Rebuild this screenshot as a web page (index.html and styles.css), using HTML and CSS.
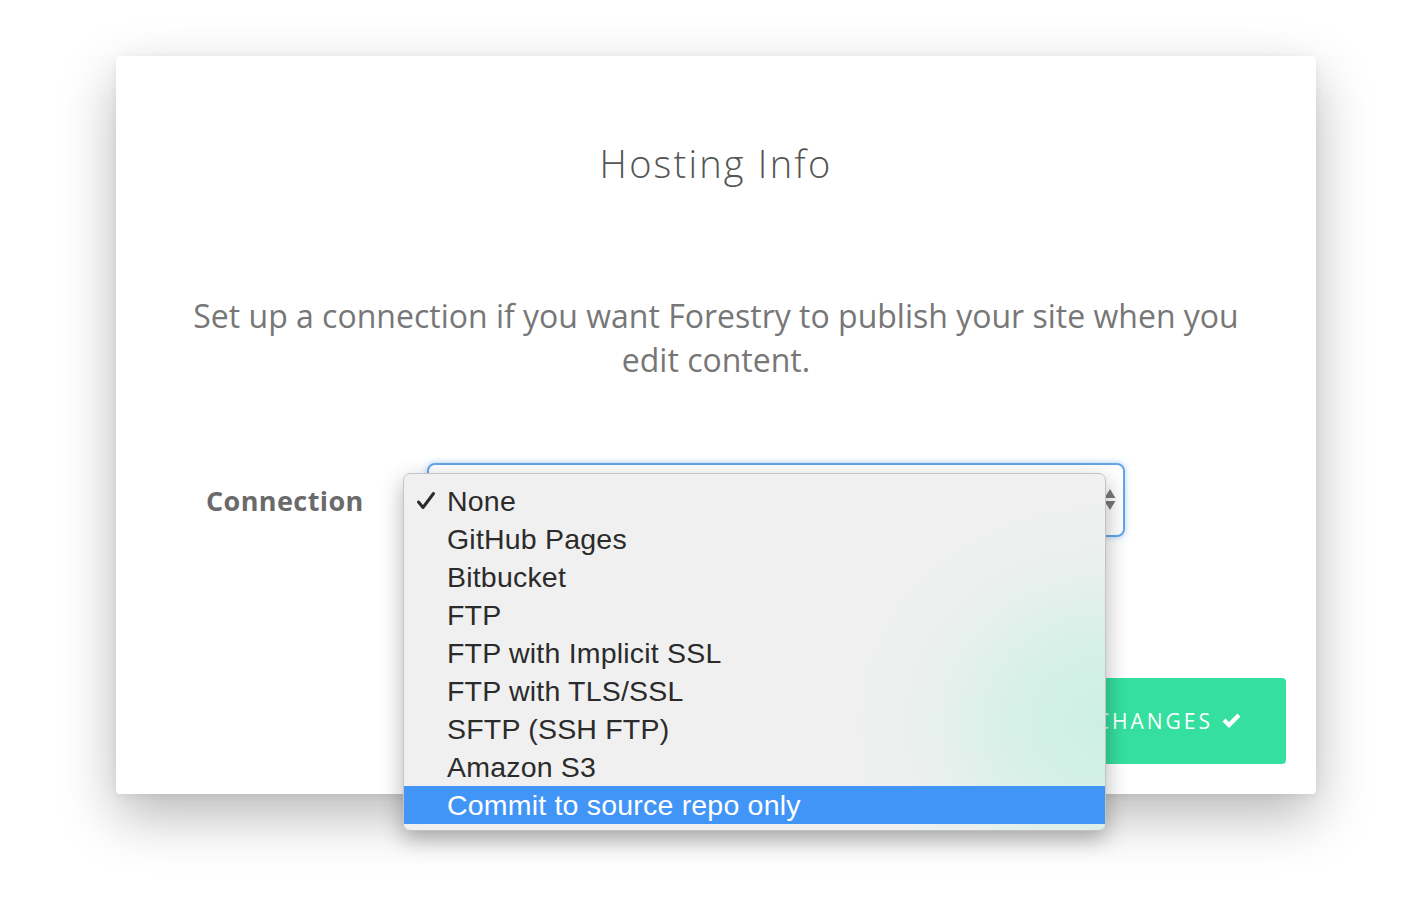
FILE: index.html
```html
<!DOCTYPE html>
<html>
<head>
<meta charset="utf-8">
<link rel="stylesheet" href="styles.css">
</head>
<body>
<div class="stage">
  <div class="card">
    <h1 class="title">Hosting Info</h1>
    <p class="lead">Set up a connection if you want Forestry to publish your site when you edit content.</p>
    <div class="form-row">
      <label class="label">Connection</label>
      <div class="select-wrap">
        <div class="select">
          <svg class="arrows" width="12" height="24" viewBox="0 0 12 24"><path d="M6 1 L11.5 10 L0.5 10 Z" fill="#7a7a7a"/><path d="M0.5 13 L11.5 13 L6 22 Z" fill="#7a7a7a"/></svg>
        </div>
        <ul class="menu">
          <li class="item"><svg class="check" width="20" height="20" viewBox="0 0 20 20"><path d="M2.5 11 L7 16.5 L17.5 2.5" fill="none" stroke="#2b2b2b" stroke-width="3" stroke-linecap="round" stroke-linejoin="round"/></svg>None</li>
          <li class="item">GitHub Pages</li>
          <li class="item">Bitbucket</li>
          <li class="item">FTP</li>
          <li class="item">FTP with Implicit SSL</li>
          <li class="item">FTP with TLS/SSL</li>
          <li class="item">SFTP (SSH FTP)</li>
          <li class="item">Amazon S3</li>
          <li class="item active">Commit to source repo only</li>
        </ul>
      </div>
    </div>
    <div class="actions">
      <button class="save">SAVE CHANGES <svg class="btn-check" width="21" height="17" viewBox="0 0 21 17"><path d="M1.5 8.5 L4.5 5.5 L8 9 L16.5 0.5 L19.5 3.5 L8 15 Z" fill="#ffffff"/></svg></button>
    </div>
  </div>
</div>
</body>
</html>
```

FILE: styles.css
```css
* { box-sizing: border-box; }
html, body { margin: 0; padding: 0; background: #ffffff; }
body { width: 1426px; height: 908px; overflow: hidden; font-family: "Open Sans", "Liberation Sans", sans-serif; }
.stage { padding: 56px 110px 0 116px; }
.card {
  width: 1200px;
  height: 738px;
  background: #ffffff;
  border-radius: 4px;
  box-shadow: 0 22px 55px rgba(0,0,0,0.28), 0 2px 8px rgba(0,0,0,0.06);
  padding: 82px 30px 30px 30px;
  display: flex;
  flex-direction: column;
}
.title {
  margin: 0;
  font-weight: 300;
  font-size: 38px;
  line-height: 50px;
  letter-spacing: 2.2px;
  color: #555555;
  text-align: center;
}
.lead {
  margin: 106px auto 0;
  width: 1060px;
  font-size: 32px;
  line-height: 44px;
  font-weight: 400;
  color: #777777;
  text-align: center;
}
.form-row {
  margin-top: 81px;
  display: flex;
  align-items: center;
  padding-left: 60px;
  height: 74px;
}
.label {
  width: 221px;
  font-weight: 700;
  font-size: 27px;
  color: #6a6a6a;
  letter-spacing: 0.4px;
}
.select-wrap { position: relative; width: 698px; height: 74px; }
.select {
  width: 698px;
  height: 74px;
  border: 2px solid #63a6e6;
  border-radius: 8px;
  box-shadow: 0 0 6px rgba(99,166,230,0.55);
  background: #ffffff;
  display: flex;
  align-items: center;
  justify-content: flex-end;
  padding-right: 7px;
}
.arrows { display: block; }
.menu {
  position: absolute;
  left: -24px;
  top: 10px;
  width: 703px;
  height: 358px;
  margin: 0;
  padding: 8px 0 7px;
  list-style: none;
  border: 1px solid #c4c4c4;
  border-radius: 7px;
  background: radial-gradient(ellipse 260px 230px at 100% 70%, #ccefe4 0%, #d6f0e8 35%, #eaf0ee 70%, #f0f0f0 100%);
  box-shadow: 0 8px 22px rgba(0,0,0,0.3);
  font-family: "Liberation Sans", Arial, sans-serif;
  overflow: hidden;
  z-index: 2;
}
.item {
  position: relative;
  height: 38px;
  line-height: 38px;
  padding-left: 43px;
  font-size: 28.5px;
  letter-spacing: 0.2px;
  color: #2b2b2b;
}
.item.active { background: #4195f7; color: #ffffff; }
.check { position: absolute; left: 12px; top: 9px; }
.actions {
  margin-top: auto;
  display: flex;
  justify-content: flex-end;
}
.save {
  height: 86px;
  border: none;
  border-radius: 4px;
  background: #35df9f;
  color: #ffffff;
  font-family: "Open Sans", sans-serif;
  font-size: 21px;
  font-weight: 400;
  letter-spacing: 3px;
  padding: 0 44px 0 44px;
  display: flex;
  align-items: center;
  gap: 8px;
}
.btn-check { display: block; }
```
